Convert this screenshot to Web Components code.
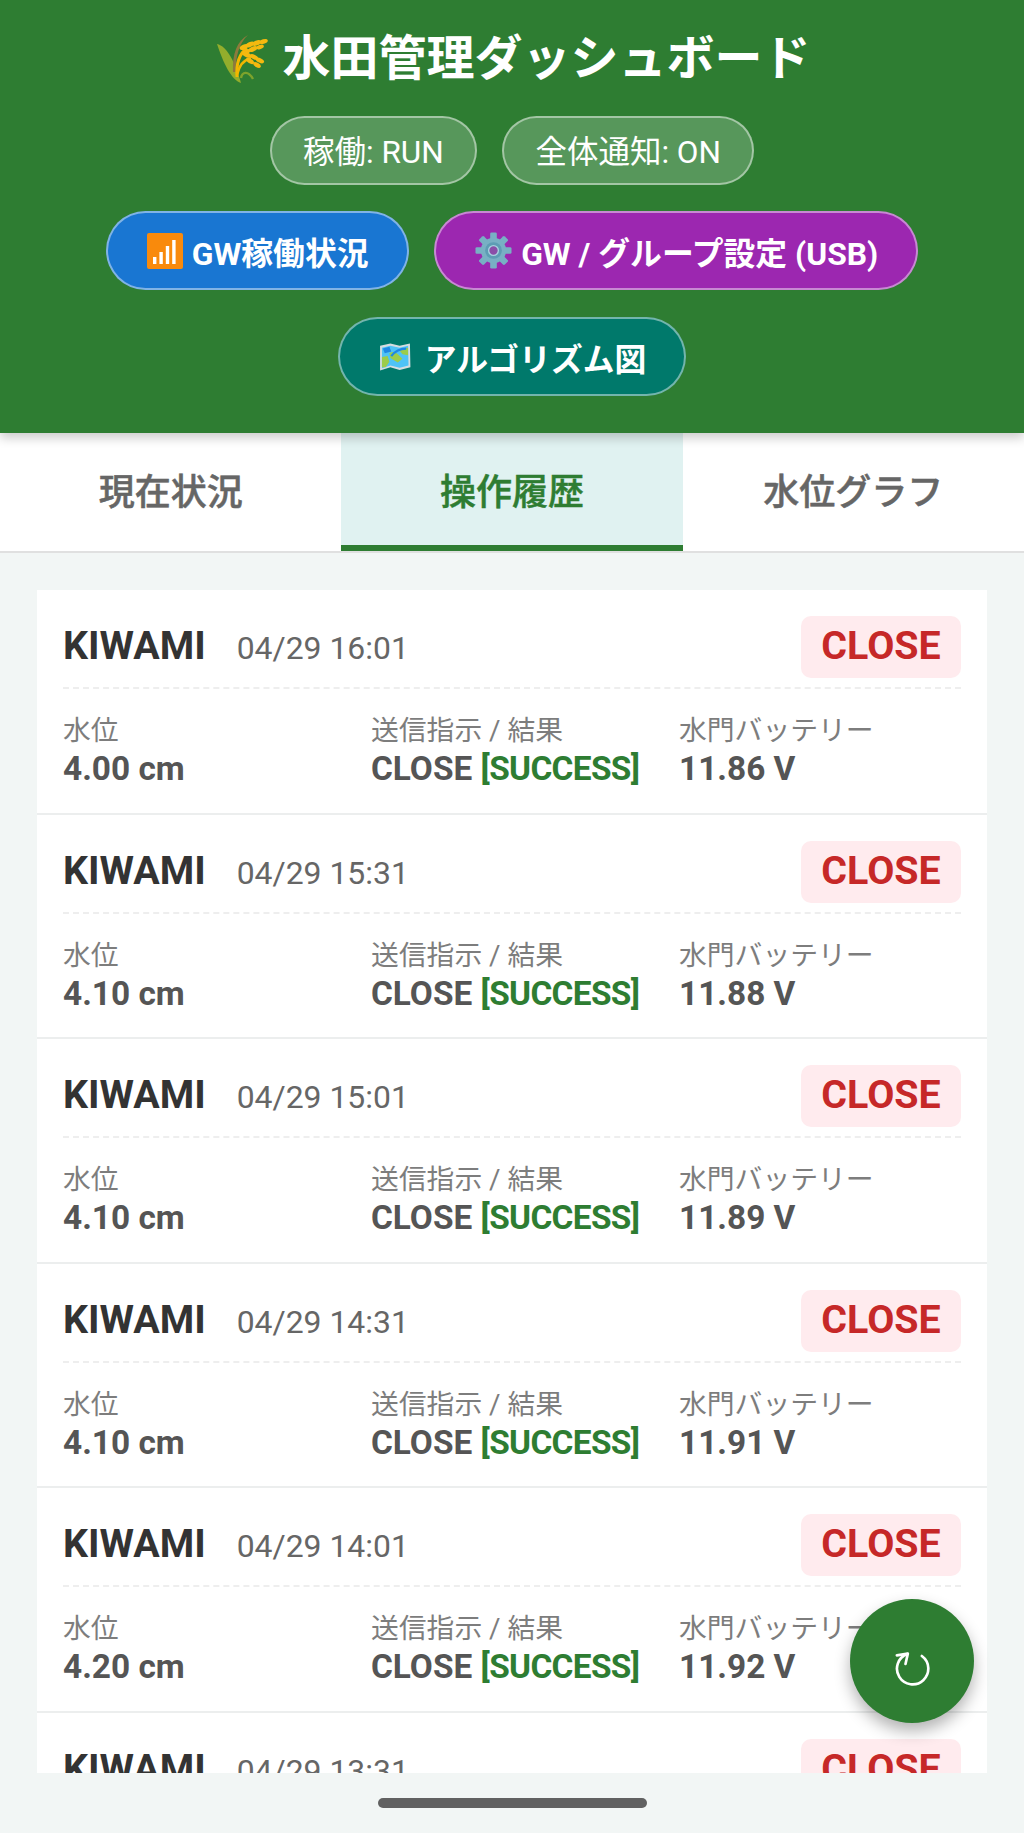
<!DOCTYPE html>
<html lang="ja"><head><meta charset="utf-8"><title>水田管理ダッシュボード</title>
<style>
html,body{margin:0;padding:0;height:100%;}
body{width:1024px;height:1833px;overflow:hidden;font-family:Roboto,"Noto Sans CJK JP",sans-serif;background:#f2f6f5;}
</style></head><body>
<paddy-app>
  <paddy-header slot="header">
    <span slot="title">水田管理ダッシュボード</span>
    <status-pill slot="status">稼働: RUN</status-pill>
    <status-pill slot="status">全体通知: ON</status-pill>
    <action-button slot="actions" color="#1976d2" icon="signal">GW稼働状況</action-button>
    <action-button slot="actions" color="#9c27b0" icon="gear">GW / グループ設定 (USB)</action-button>
    <action-button slot="actions" color="#00796b" icon="map">アルゴリズム図</action-button>
  </paddy-header>
  <tab-bar slot="tabs">
    <tab-item>現在状況</tab-item>
    <tab-item active>操作履歴</tab-item>
    <tab-item>水位グラフ</tab-item>
  </tab-bar>
  <log-card slot="list" time="04/29 16:01" level="4.00 cm" battery="11.86 V"></log-card>
  <log-card slot="list" time="04/29 15:31" level="4.10 cm" battery="11.88 V"></log-card>
  <log-card slot="list" time="04/29 15:01" level="4.10 cm" battery="11.89 V"></log-card>
  <log-card slot="list" time="04/29 14:31" level="4.10 cm" battery="11.91 V"></log-card>
  <log-card slot="list" time="04/29 14:01" level="4.20 cm" battery="11.92 V"></log-card>
  <log-card slot="list" time="04/29 13:31" level="4.20 cm" battery="11.93 V"></log-card>
  <refresh-fab slot="fab"></refresh-fab>
</paddy-app>
<script>
const ICONS={
signal:`<svg width="36" height="36" viewBox="0 0 36 36"><rect width="36" height="36" rx="2" fill="#f98a0c"/><g fill="#fff"><rect x="6" y="24" width="3.4" height="7"/><rect x="12.4" y="19" width="3.4" height="12"/><rect x="18.8" y="13" width="3.4" height="18"/><rect x="25.2" y="7" width="3.4" height="24"/></g></svg>`,
gear:`<svg width="37" height="37" viewBox="0 0 38 38"><g fill="#78b0c4"><circle cx="19" cy="19" r="13"/><rect x="15.6" y="0.5" width="6.8" height="37" rx="1.4"/><rect x="15.6" y="0.5" width="6.8" height="37" rx="1.4" transform="rotate(45 19 19)"/><rect x="15.6" y="0.5" width="6.8" height="37" rx="1.4" transform="rotate(90 19 19)"/><rect x="15.6" y="0.5" width="6.8" height="37" rx="1.4" transform="rotate(135 19 19)"/></g><circle cx="19" cy="19" r="8.6" fill="#5d9db4"/><circle cx="19" cy="19" r="5" fill="#8a4fa8"/><circle cx="19" cy="19" r="5" fill="none" stroke="#a8d3e0" stroke-width="1.4"/></svg>`,
map:`<svg width="32" height="28" viewBox="0 0 34 30" style="margin-right:5px"><path d="M1 3 L12 0.5 L22 3 L33 0.5 L33.5 26 L22 29 L12 26 L1 29.5Z" fill="#d5dde0"/><path d="M3 5 L12 3 L22 5 L31 3 L31.5 24 L22 26.5 L12 24 L3 27Z" fill="#4fc3f7"/><path d="M11 11 Q16 8 20 12 L25 17 L20 21 L15 18 L12 16Z" fill="#9ccc4a"/><path d="M21 7 L31 5 L31 13 L25 12Z" fill="#9ccc4a"/><path d="M3 15 L9 14 L11 20 L7 26 L3 26Z" fill="#9ccc4a"/><path d="M4 6 L11 4 L13 9 L6 11Z" fill="#1e88e5"/><path d="M13 14 Q19 6 29 6" fill="none" stroke="#1e88e5" stroke-width="2.4"/></svg>`,
rice:`<svg width="52" height="50" viewBox="0 0 52 50"><path d="M0 10 C10 12 18 28 24 49 C14 46 6 28 0 10Z" fill="#93ad2c"/><path d="M31 1 C20 7 15 20 16 38 L19 38 C18 24 22 9 31 1Z" fill="#8d7a3c"/><path d="M20 43 C19 30 22 20 30 14" fill="none" stroke="#f2b600" stroke-width="3"/><path d="M20 41 C22 32 26 26 34 24" fill="none" stroke="#f2b600" stroke-width="2.6"/><path d="M24 44 C25 38 31 36 36 45" fill="none" stroke="#7da32c" stroke-width="2.4"/><g fill="#f5b90f"><ellipse cx="27" cy="13" rx="4.6" ry="2.4" transform="rotate(-25 27 13)"/><ellipse cx="33" cy="10.5" rx="4.6" ry="2.4" transform="rotate(-25 33 10.5)"/><ellipse cx="39.5" cy="9" rx="4.6" ry="2.4" transform="rotate(-20 39.5 9)"/><ellipse cx="46.5" cy="7.5" rx="4.4" ry="2.2" transform="rotate(-15 46.5 7.5)"/><ellipse cx="29" cy="18" rx="4.6" ry="2.4" transform="rotate(-25 29 18)"/><ellipse cx="36" cy="15" rx="4.6" ry="2.4" transform="rotate(-25 36 15)"/><ellipse cx="43" cy="13" rx="4" ry="2.1" transform="rotate(-20 43 13)"/><ellipse cx="30" cy="21" rx="4.4" ry="2.3" transform="rotate(20 30 21)"/><ellipse cx="37" cy="23" rx="4.4" ry="2.3" transform="rotate(25 37 23)"/><ellipse cx="43" cy="26.5" rx="4.4" ry="2.3" transform="rotate(25 43 26.5)"/><ellipse cx="33" cy="27" rx="4.4" ry="2.3" transform="rotate(30 33 27)"/><ellipse cx="40" cy="31" rx="4.2" ry="2.2" transform="rotate(30 40 31)"/></g></svg>`,
refresh:`<svg width="37" height="35" viewBox="190 215 110 105" role="img" aria-label="更新"><path d="M273 230 A47 47 0 1 1 229 224" fill="none" stroke="#fff" stroke-width="8" stroke-linecap="round"/><path d="M198 228 L231 223 L224 254" fill="none" stroke="#fff" stroke-width="8" stroke-linecap="round" stroke-linejoin="round"/></svg>`
};
function def(name,html){
  customElements.define(name,class extends HTMLElement{
    constructor(){super();this.attachShadow({mode:'open'});}
    connectedCallback(){this.shadowRoot.innerHTML=typeof html==='function'?html(this):html;}
  });
}
def('paddy-app',`<style>
:host{display:flex;flex-direction:column;width:1024px;height:1833px;position:relative;overflow:hidden;background:#f2f6f5;}
.list{flex:1;min-height:0;overflow:hidden;padding:37px 37px 0;background:#f2f6f5;}
.list-inner{height:100%;overflow:hidden;}
.nav{height:60px;flex:none;display:flex;justify-content:center;align-items:flex-start;}
.bar{width:269px;height:10px;margin-top:25px;border-radius:5px;background:#616161;}
</style>
<slot name="header"></slot><slot name="tabs"></slot>
<div class="list"><div class="list-inner"><slot name="list"></slot></div></div>
<div class="nav"><div class="bar"></div></div>
<slot name="fab"></slot>`);
def('paddy-header',`<style>
:host{display:block;flex:none;box-sizing:border-box;height:433px;background:#2e7d32;color:#fff;padding-top:33px;position:relative;z-index:2;box-shadow:0 5px 10px rgba(0,0,0,.2);}
h1{margin:0;height:52px;padding-left:4px;display:flex;justify-content:center;align-items:center;gap:13px;font-size:48px;line-height:52px;font-weight:700;}
svg{display:block;margin-top:-1px;}
.row{display:flex;flex-wrap:wrap;justify-content:center;gap:25.7px;}
.status{margin-top:31px;}
.actions{margin-top:26px;gap:27px 25.7px;}
</style>
<h1>${ICONS.rice}<slot name="title"></slot></h1>
<div class="row status"><slot name="status"></slot></div>
<div class="row actions"><slot name="actions"></slot></div>`);
def('status-pill',`<style>
:host{display:block;box-sizing:border-box;height:69px;padding:5px 31px 0;border:2px solid rgba(255,255,255,.45);border-radius:35px;background:rgba(255,255,255,.2);font-size:31.5px;line-height:60px;color:#fff;white-space:nowrap;}
</style><slot></slot>`);
def('action-button',h=>`<style>
:host{display:flex;align-items:center;gap:9px;box-sizing:border-box;height:79px;padding:0 38px 0 39px;border:2px solid rgba(255,255,255,.45);border-radius:40px;background:${h.getAttribute('color')};font-size:31.8px;font-weight:700;color:#fff;white-space:nowrap;}
svg{display:block;flex:none;}
</style>${ICONS[h.getAttribute('icon')]}<span><slot></slot></span>`);
def('tab-bar',`<style>
:host{display:flex;flex:none;box-sizing:border-box;height:120px;background:#fff;border-bottom:2px solid #e0e0e0;}
</style><slot></slot>`);
def('tab-item',h=>`<style>
:host{flex:1;box-sizing:border-box;height:118px;display:flex;align-items:center;justify-content:center;font-size:36px;font-weight:500;-webkit-text-stroke:.5px currentColor;color:${h.hasAttribute('active')?'#2e7d32':'#666'};background:${h.hasAttribute('active')?'#e0f2f1':'transparent'};border-bottom:6px solid ${h.hasAttribute('active')?'#2e7d32':'transparent'};}
</style><slot></slot>`);
def('log-card',h=>`<style>
:host{display:block;box-sizing:border-box;width:950px;height:224.6px;padding:26px 26px 0;background:#fff;border-bottom:2.6px solid #eceeee;}
.head{display:flex;align-items:baseline;height:73px;box-sizing:border-box;border-bottom:2.6px dashed #eee;}
.name{font-size:39.4px;font-weight:700;color:#333;margin-right:31px;line-height:60px;}
.time{font-size:31.9px;color:#666;}
.badge{margin-left:auto;box-sizing:border-box;width:160px;height:62px;line-height:60px;text-align:center;border-radius:10px;background:#ffebee;color:#c62828;font-size:39.4px;font-weight:700;}
.grid{display:grid;grid-template-columns:283px 283px 283px;gap:25px;margin-top:22px;}
.l{font-size:27.8px;line-height:39px;color:#7d7d7d;}
.v{font-size:33.4px;line-height:37px;font-weight:700;color:#555;white-space:nowrap;}
.s{color:#2e7d32;letter-spacing:-.65px;}
</style>
<div class="head"><span class="name">KIWAMI</span><span class="time">${h.getAttribute('time')}</span><span class="badge">CLOSE</span></div>
<div class="grid">
<div><div class="l">水位</div><div class="v">${h.getAttribute('level')}</div></div>
<div><div class="l">送信指示 / 結果</div><div class="v">CLOSE <span class="s">[SUCCESS]</span></div></div>
<div><div class="l">水門バッテリー</div><div class="v">${h.getAttribute('battery')}</div></div>
</div>`);
def('refresh-fab',`<style>
:host{position:absolute;left:850px;top:1599px;width:124px;height:124px;border-radius:50%;background:#2e7d32;box-shadow:0 8px 16px rgba(0,0,0,.3);display:flex;align-items:center;justify-content:center;z-index:5;}
svg{display:block;margin-top:15px;}
</style>${ICONS.refresh}`);
</script>
</body></html>
